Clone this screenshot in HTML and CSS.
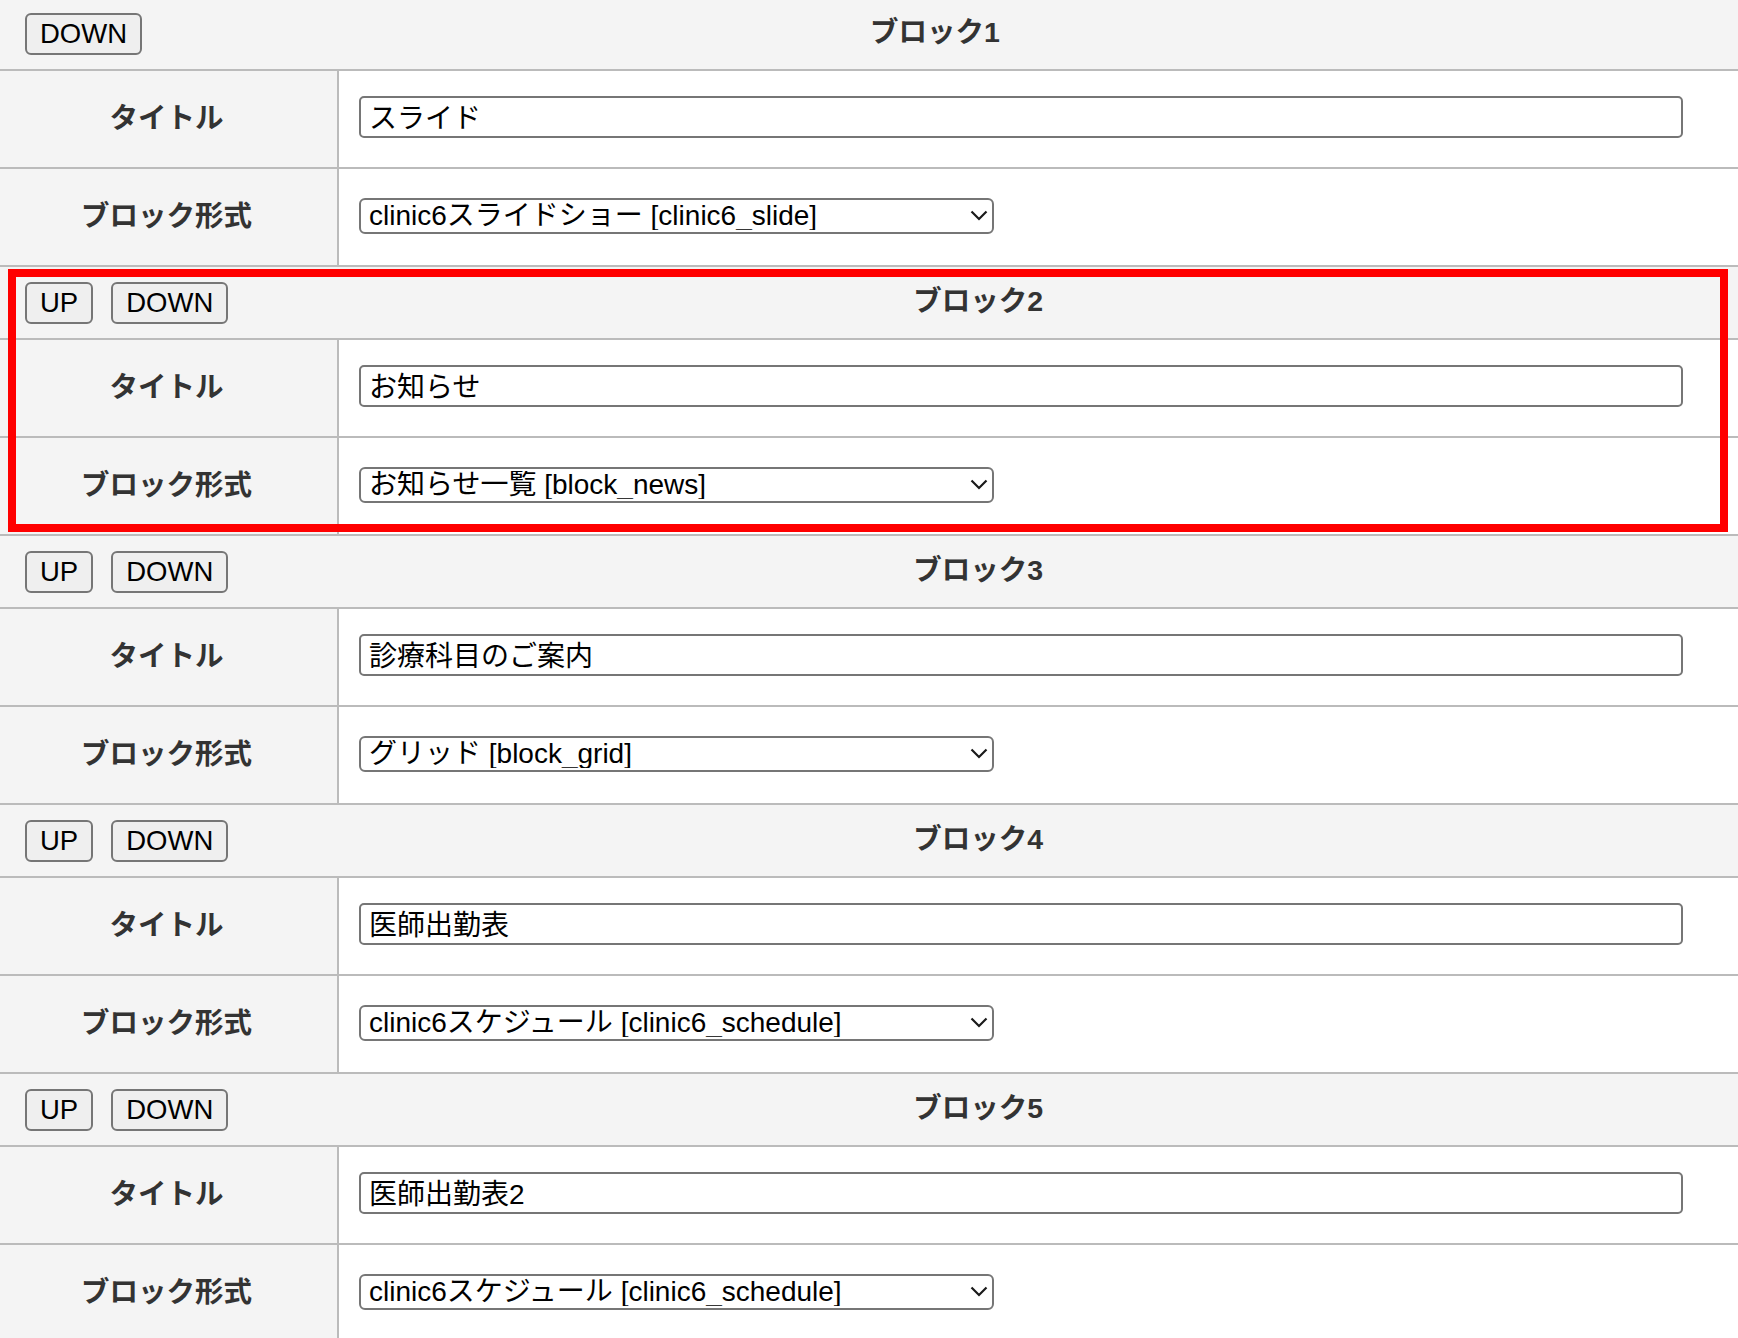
FILE: index.html
```html
<!DOCTYPE html>
<html lang="ja">
<head>
<meta charset="utf-8">
<title>ブロック設定</title>
<link rel="stylesheet" href="styles.css">
</head>
<body>
<div class="blocks">

  <section class="block">
    <div class="block-head">
      <div class="head-buttons">
        <button class="btn" type="button">DOWN</button>
      </div>
      <div class="head-title">ブロック1</div>
    </div>
    <div class="field-row">
      <div class="label">タイトル</div>
      <div class="value"><input class="text-input" type="text" value="スライド"></div>
    </div>
    <div class="field-row field-row-select">
      <div class="label">ブロック形式</div>
      <div class="value">
        <div class="select-wrap">
          <select class="select"><option>clinic6スライドショー [clinic6_slide]</option></select>
          <svg class="chevron" width="18" height="11" viewBox="0 0 18 11"><polyline points="1.5,1.5 9,9 16.5,1.5" fill="none" stroke="#1a1a1a" stroke-width="2.2"/></svg>
        </div>
      </div>
    </div>
  </section>

  <section class="block block-highlight">
    <div class="block-head">
      <div class="head-buttons">
        <button class="btn" type="button">UP</button>
        <button class="btn" type="button">DOWN</button>
      </div>
      <div class="head-title">ブロック2</div>
    </div>
    <div class="field-row">
      <div class="label">タイトル</div>
      <div class="value"><input class="text-input" type="text" value="お知らせ"></div>
    </div>
    <div class="field-row field-row-select">
      <div class="label">ブロック形式</div>
      <div class="value">
        <div class="select-wrap">
          <select class="select"><option>お知らせ一覧 [block_news]</option></select>
          <svg class="chevron" width="18" height="11" viewBox="0 0 18 11"><polyline points="1.5,1.5 9,9 16.5,1.5" fill="none" stroke="#1a1a1a" stroke-width="2.2"/></svg>
        </div>
      </div>
    </div>
  </section>

  <section class="block">
    <div class="block-head">
      <div class="head-buttons">
        <button class="btn" type="button">UP</button>
        <button class="btn" type="button">DOWN</button>
      </div>
      <div class="head-title">ブロック3</div>
    </div>
    <div class="field-row">
      <div class="label">タイトル</div>
      <div class="value"><input class="text-input" type="text" value="診療科目のご案内"></div>
    </div>
    <div class="field-row field-row-select">
      <div class="label">ブロック形式</div>
      <div class="value">
        <div class="select-wrap">
          <select class="select"><option>グリッド [block_grid]</option></select>
          <svg class="chevron" width="18" height="11" viewBox="0 0 18 11"><polyline points="1.5,1.5 9,9 16.5,1.5" fill="none" stroke="#1a1a1a" stroke-width="2.2"/></svg>
        </div>
      </div>
    </div>
  </section>

  <section class="block">
    <div class="block-head">
      <div class="head-buttons">
        <button class="btn" type="button">UP</button>
        <button class="btn" type="button">DOWN</button>
      </div>
      <div class="head-title">ブロック4</div>
    </div>
    <div class="field-row">
      <div class="label">タイトル</div>
      <div class="value"><input class="text-input" type="text" value="医師出勤表"></div>
    </div>
    <div class="field-row field-row-select">
      <div class="label">ブロック形式</div>
      <div class="value">
        <div class="select-wrap">
          <select class="select"><option>clinic6スケジュール [clinic6_schedule]</option></select>
          <svg class="chevron" width="18" height="11" viewBox="0 0 18 11"><polyline points="1.5,1.5 9,9 16.5,1.5" fill="none" stroke="#1a1a1a" stroke-width="2.2"/></svg>
        </div>
      </div>
    </div>
  </section>

  <section class="block">
    <div class="block-head">
      <div class="head-buttons">
        <button class="btn" type="button">UP</button>
        <button class="btn" type="button">DOWN</button>
      </div>
      <div class="head-title">ブロック5</div>
    </div>
    <div class="field-row">
      <div class="label">タイトル</div>
      <div class="value"><input class="text-input" type="text" value="医師出勤表2"></div>
    </div>
    <div class="field-row field-row-select">
      <div class="label">ブロック形式</div>
      <div class="value">
        <div class="select-wrap">
          <select class="select"><option>clinic6スケジュール [clinic6_schedule]</option></select>
          <svg class="chevron" width="18" height="11" viewBox="0 0 18 11"><polyline points="1.5,1.5 9,9 16.5,1.5" fill="none" stroke="#1a1a1a" stroke-width="2.2"/></svg>
        </div>
      </div>
    </div>
  </section>

</div>
</body>
</html>
```

FILE: styles.css
```css
* {
  box-sizing: border-box;
}

html, body {
  margin: 0;
  padding: 0;
  background: #ffffff;
}

body {
  font-family: "Liberation Sans", "Noto Sans CJK JP", sans-serif;
  color: #000;
  overflow: hidden;
}

.blocks {
  margin-top: -4px;
}

.block {
  border-top: 2px solid #bbbbbb;
}

.block-highlight {
  position: relative;
}

.block-highlight::after {
  content: "";
  position: absolute;
  top: 2px;
  bottom: 2px;
  left: 8px;
  right: 10px;
  border: 8px solid #ff0000;
  pointer-events: none;
}

.block-head {
  height: 71px;
  background: #f4f4f4;
  display: flex;
  align-items: center;
  padding: 0 10px 0 25px;
}

.head-buttons {
  display: flex;
  gap: 18px;
}

.btn {
  height: 42px;
  padding: 0 13px;
  border: 2px solid #767676;
  border-radius: 6px;
  background: #efefef;
  color: #000;
  font-family: "Liberation Sans", "Noto Sans CJK JP", sans-serif;
  font-size: 27.5px;
  line-height: 1;
}

.head-title {
  flex: 1;
  text-align: center;
  font-family: "Liberation Sans", "Noto Sans CJK JP", sans-serif;
  font-weight: bold;
  font-size: 28.5px;
  color: #333333;
  padding-bottom: 9px;
}

.field-row {
  display: grid;
  grid-template-columns: 339px 1fr;
  height: 98px;
  border-top: 2px solid #bbbbbb;
}

.label {
  background: #f4f4f4;
  border-right: 2px solid #bbbbbb;
  display: flex;
  align-items: center;
  justify-content: center;
  font-weight: bold;
  font-size: 28.5px;
  color: #333333;
  padding: 0 4px 8px 0;
}

.value {
  display: flex;
  align-items: center;
  padding: 0 55px 4px 20px;
}

.field-row-select .value {
  padding-bottom: 2px;
}

.text-input {
  width: 100%;
  height: 42px;
  border: 2px solid #767676;
  border-radius: 5px;
  padding: 0 8px 3px 8px;
  font-family: "Liberation Sans", "Noto Sans CJK JP", sans-serif;
  font-size: 28px;
  color: #000;
  background: #fff;
}

.select-wrap {
  position: relative;
  width: 635px;
  height: 36px;
}

.select {
  appearance: none;
  -webkit-appearance: none;
  width: 100%;
  height: 100%;
  border: 2px solid #767676;
  border-radius: 6px;
  background: #fff;
  padding: 0 40px 0 8px;
  font-family: "Liberation Sans", "Noto Sans CJK JP", sans-serif;
  font-size: 28px;
  color: #000;
  line-height: 1;
}

.chevron {
  position: absolute;
  right: 6px;
  top: 12px;
  pointer-events: none;
}
```
